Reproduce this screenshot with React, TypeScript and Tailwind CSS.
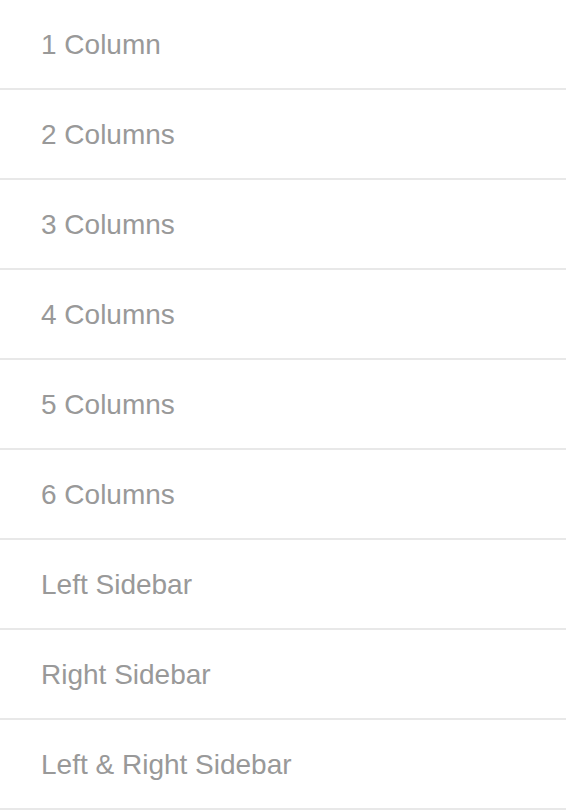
const items = [
  "1 Column",
  "2 Columns",
  "3 Columns",
  "4 Columns",
  "5 Columns",
  "6 Columns",
  "Left Sidebar",
  "Right Sidebar",
  "Left & Right Sidebar",
];

export default function App() {
  return (
    <ul className="bg-white font-['Liberation_Sans',Arial,sans-serif]">
      {items.map((label) => (
        <li
          key={label}
          className="flex h-[90px] items-center border-b-2 border-[#e8e8e8] pl-[41px] pt-[2px] text-[28px] text-[#999999]"
        >
          {label}
        </li>
      ))}
    </ul>
  );
}
